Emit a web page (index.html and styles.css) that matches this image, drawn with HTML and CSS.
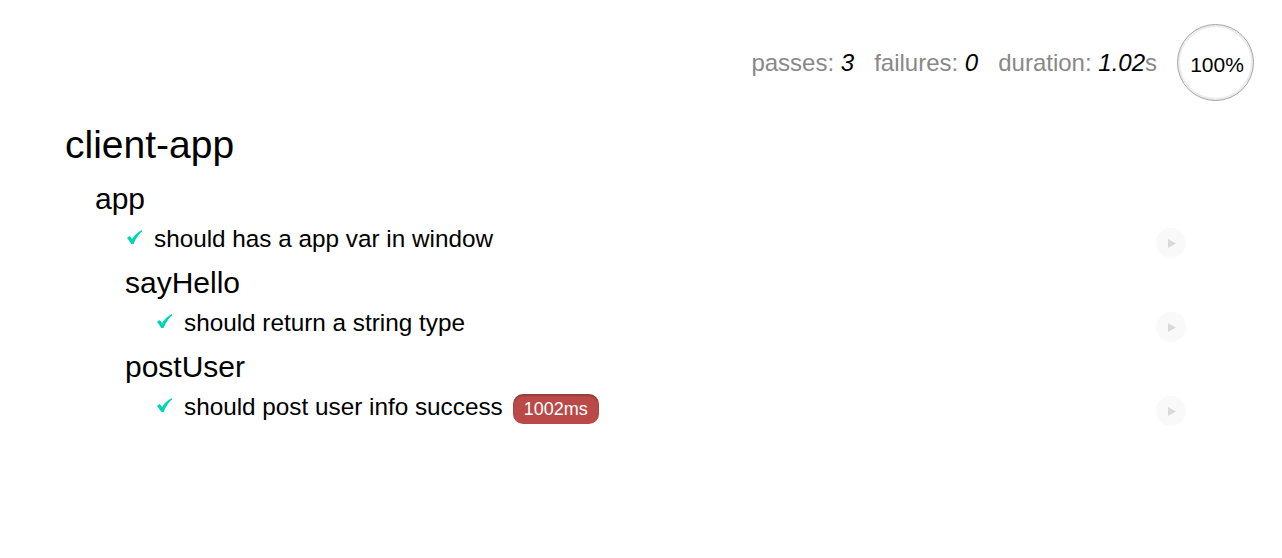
FILE: index.html
```html
<!DOCTYPE html>
<html lang="en">
<head>
<meta charset="utf-8">
<title>Mocha Tests</title>
<link rel="stylesheet" href="styles.css">
</head>
<body>
<div id="mocha">
  <header class="stats">
    <ul class="stats-list">
      <li class="stat">passes: <em>3</em></li>
      <li class="stat">failures: <em>0</em></li>
      <li class="stat">duration: <em>1.02</em>s</li>
    </ul>
    <div class="progress"><span class="progress-text">100%</span></div>
  </header>

  <ul class="report">
    <li class="suite">
      <h1 class="suite-title top">client-app</h1>
      <ul class="list">
        <li class="suite nested">
          <h1 class="suite-title">app</h1>
          <ul class="list">
            <li class="test nested">
              <h2 class="test-title"><svg class="check" width="15" height="14" viewBox="0 0 15 14"><path d="M0 7.8 L2.7 6.1 L5.1 9.1 C7.3 5.3 10.5 2.1 15 0 L15 1.5 C11.7 4.3 8.8 8.4 6.6 14 L4.3 14 Z" fill="#00d6b2"/></svg>should has a app var in window<a class="replay" href="#"><svg width="30" height="30" viewBox="0 0 30 30"><path d="M12 11 L20 15.5 L12 20 Z" fill="#888"/></svg></a></h2>
            </li>
            <li class="suite nested">
              <h1 class="suite-title">sayHello</h1>
              <ul class="list">
                <li class="test nested">
                  <h2 class="test-title"><svg class="check" width="15" height="14" viewBox="0 0 15 14"><path d="M0 7.8 L2.7 6.1 L5.1 9.1 C7.3 5.3 10.5 2.1 15 0 L15 1.5 C11.7 4.3 8.8 8.4 6.6 14 L4.3 14 Z" fill="#00d6b2"/></svg>should return a string type<a class="replay" href="#"><svg width="30" height="30" viewBox="0 0 30 30"><path d="M12 11 L20 15.5 L12 20 Z" fill="#888"/></svg></a></h2>
                </li>
              </ul>
            </li>
            <li class="suite nested">
              <h1 class="suite-title">postUser</h1>
              <ul class="list">
                <li class="test nested">
                  <h2 class="test-title"><svg class="check" width="15" height="14" viewBox="0 0 15 14"><path d="M0 7.8 L2.7 6.1 L5.1 9.1 C7.3 5.3 10.5 2.1 15 0 L15 1.5 C11.7 4.3 8.8 8.4 6.6 14 L4.3 14 Z" fill="#00d6b2"/></svg>should post user info success<span class="duration">1002ms</span><a class="replay" href="#"><svg width="30" height="30" viewBox="0 0 30 30"><path d="M12 11 L20 15.5 L12 20 Z" fill="#888"/></svg></a></h2>
                </li>
              </ul>
            </li>
          </ul>
        </li>
      </ul>
    </li>
  </ul>
</div>
</body>
</html>
```

FILE: styles.css
```css
html, body {
  margin: 0;
  padding: 0;
  background: #fff;
}

#mocha {
  font-family: "Liberation Sans", Arial, Helvetica, sans-serif;
  color: #000;
}

#mocha ul,
#mocha li {
  margin: 0;
  padding: 0;
  list-style: none;
}

/* stats header */
.stats {
  display: flex;
  justify-content: flex-end;
  align-items: center;
  gap: 20px;
  padding: 24px 28px 0 0;
}

.stats-list {
  display: flex;
  gap: 20px;
}

.stat {
  font-size: 24px;
  line-height: 24px;
  color: #888;
}

.stat em {
  color: #000;
  font-style: italic;
}

.progress {
  box-sizing: border-box;
  width: 77px;
  height: 77px;
  border-radius: 50%;
  border: 1.5px solid #a3a3a3;
  box-shadow: inset 0 0 0 2px #ececec;
  display: flex;
  align-items: center;
  justify-content: center;
  padding-top: 4px;
}

.progress-text {
  font-size: 21px;
  line-height: 22px;
  color: #000;
  padding-left: 3px;
}

/* report */
.report {
  margin-top: 14px !important;
  padding: 0 96px 0 65px !important;
}

.suite-title {
  margin: 0;
  font-weight: normal;
  font-size: 30px;
  line-height: 48px;
}

.suite-title.top {
  font-size: 39px;
  line-height: 60px;
}

.nested {
  margin-left: 30px !important;
}

.test-title {
  position: relative;
  margin: 0;
  font-weight: normal;
  font-size: 24.3px;
  line-height: 32px;
  padding-bottom: 4px;
}

.check {
  vertical-align: 3px;
  margin: 0 12px 0 2px;
}

.duration {
  font-size: 18px;
  line-height: 1;
  margin-left: 10px;
  padding: 5px 11px;
  color: #fff;
  background: #b94a48;
  border-radius: 10px;
  box-shadow: inset 0 2px 2px rgba(0, 0, 0, 0.2);
}

.replay {
  position: absolute;
  top: 5px;
  right: 0;
  width: 30px;
  height: 30px;
  border-radius: 50%;
  background: #eee;
  opacity: 0.3;
  display: block;
  text-decoration: none;
}

.replay svg {
  display: block;
}
```
